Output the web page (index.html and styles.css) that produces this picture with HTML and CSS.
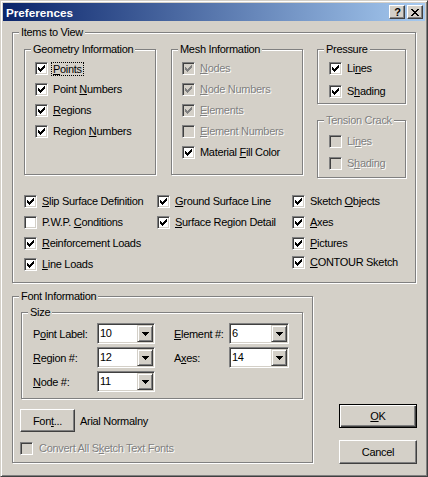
FILE: index.html
```html
<!DOCTYPE html>
<html>
<head>
<meta charset="utf-8">
<title>Preferences</title>
<link rel="stylesheet" href="styles.css">
</head>
<body>
<svg class="defs" width="0" height="0">
  <symbol id="chk" viewBox="0 0 7 7"><path d="M0 2h1v3H0z M1 3h1v3H1z M2 4h1v3H2z M3 3h1v3H3z M4 2h1v3H4z M5 1h1v3H5z M6 0h1v3H6z"/></symbol>
  <symbol id="tri" viewBox="0 0 7 4"><path d="M0 0h7v1H0z M1 1h5v1H1z M2 2h3v1H2z M3 3h1v1H3z"/></symbol>
</svg>
<div class="window">
  <div class="titlebar">
    <span class="title">Preferences</span>
    <div class="caption-btns">
      <span class="cap-btn help">?</span>
      <span class="cap-btn close"><svg width="8" height="7" viewBox="0 0 8 7"><path d="M0 0h2v1H0z M6 0h2v1H6z M1 1h2v1H1z M5 1h2v1H5z M2 2h4v1H2z M3 3h2v1H3z M2 4h4v1H2z M1 5h2v1H1z M5 5h2v1H5z M0 6h2v1H0z M6 6h2v1H6z"/></svg></span>
    </div>
  </div>
  <div class="client">
    <div class="group items">
      <span class="legend">Items to View</span>
      <div class="top-row">
        <div class="group geo">
          <span class="legend">Geometry Information</span>
          <div class="cb-list">
            <div class="cb-row"><span class="cb"><svg class="mark"><use href="#chk"/></svg></span><span class="focus"><u>P</u>oints</span></div>
            <div class="cb-row"><span class="cb"><svg class="mark"><use href="#chk"/></svg></span><span>Point <u>N</u>umbers</span></div>
            <div class="cb-row"><span class="cb"><svg class="mark"><use href="#chk"/></svg></span><span><u>R</u>egions</span></div>
            <div class="cb-row"><span class="cb"><svg class="mark"><use href="#chk"/></svg></span><span>Region <u>N</u>umbers</span></div>
          </div>
        </div>
        <div class="group mesh">
          <span class="legend">Mesh Information</span>
          <div class="cb-list">
            <div class="cb-row disabled"><span class="cb"><svg class="mark"><use href="#chk"/></svg></span><span><u>N</u>odes</span></div>
            <div class="cb-row disabled"><span class="cb"><svg class="mark"><use href="#chk"/></svg></span><span><u>N</u>ode Numbers</span></div>
            <div class="cb-row disabled"><span class="cb"><svg class="mark"><use href="#chk"/></svg></span><span><u>E</u>lements</span></div>
            <div class="cb-row disabled"><span class="cb"></span><span><u>E</u>lement Numbers</span></div>
            <div class="cb-row"><span class="cb"><svg class="mark"><use href="#chk"/></svg></span><span>Material <u>F</u>ill Color</span></div>
          </div>
        </div>
        <div class="side-col">
          <div class="group pressure">
            <span class="legend">Pressure</span>
            <div class="cb-list wide">
              <div class="cb-row"><span class="cb"><svg class="mark"><use href="#chk"/></svg></span><span>Li<u>n</u>es</span></div>
              <div class="cb-row"><span class="cb"><svg class="mark"><use href="#chk"/></svg></span><span>S<u>h</u>ading</span></div>
            </div>
          </div>
          <div class="group tension">
            <span class="legend disabled-text">Tension Crack</span>
            <div class="cb-list mid">
              <div class="cb-row disabled"><span class="cb"></span><span>Li<u>n</u>es</span></div>
              <div class="cb-row disabled"><span class="cb"></span><span>S<u>h</u>ading</span></div>
            </div>
          </div>
        </div>
      </div>
      <div class="opts">
        <div class="cb-list col1">
          <div class="cb-row"><span class="cb"><svg class="mark"><use href="#chk"/></svg></span><span><u>S</u>lip Surface Definition</span></div>
          <div class="cb-row"><span class="cb"></span><span>P.W.P. <u>C</u>onditions</span></div>
          <div class="cb-row"><span class="cb"><svg class="mark"><use href="#chk"/></svg></span><span><u>R</u>einforcement Loads</span></div>
          <div class="cb-row"><span class="cb"><svg class="mark"><use href="#chk"/></svg></span><span><u>L</u>ine Loads</span></div>
        </div>
        <div class="cb-list col2">
          <div class="cb-row"><span class="cb"><svg class="mark"><use href="#chk"/></svg></span><span><u>G</u>round Surface Line</span></div>
          <div class="cb-row"><span class="cb"><svg class="mark"><use href="#chk"/></svg></span><span><u>S</u>urface Region Detail</span></div>
        </div>
        <div class="cb-list col3">
          <div class="cb-row"><span class="cb"><svg class="mark"><use href="#chk"/></svg></span><span>Sketch <u>O</u>bjects</span></div>
          <div class="cb-row"><span class="cb"><svg class="mark"><use href="#chk"/></svg></span><span><u>A</u>xes</span></div>
          <div class="cb-row"><span class="cb"><svg class="mark"><use href="#chk"/></svg></span><span><u>P</u>ictures</span></div>
          <div class="cb-row last"><span class="cb"><svg class="mark"><use href="#chk"/></svg></span><span><u>C</u>ONTOUR Sketch</span></div>
        </div>
      </div>
    </div>

    <div class="bottom">
      <div class="group fontinfo">
        <span class="legend">Font Information</span>
        <div class="group size">
          <span class="legend">Size</span>
          <div class="size-cols">
            <div class="size-col left">
              <div class="field"><span class="flabel">P<u>o</u>int Label:</span><div class="combo"><span class="cval">10</span><span class="dd"><svg width="7" height="4"><use href="#tri"/></svg></span></div></div>
              <div class="field"><span class="flabel"><u>R</u>egion #:</span><div class="combo"><span class="cval">12</span><span class="dd"><svg width="7" height="4"><use href="#tri"/></svg></span></div></div>
              <div class="field"><span class="flabel"><u>N</u>ode #:</span><div class="combo"><span class="cval">11</span><span class="dd"><svg width="7" height="4"><use href="#tri"/></svg></span></div></div>
            </div>
            <div class="size-col right">
              <div class="field"><span class="flabel"><u>E</u>lement #:</span><div class="combo"><span class="cval">6</span><span class="dd"><svg width="7" height="4"><use href="#tri"/></svg></span></div></div>
              <div class="field"><span class="flabel">A<u>x</u>es:</span><div class="combo"><span class="cval">14</span><span class="dd"><svg width="7" height="4"><use href="#tri"/></svg></span></div></div>
            </div>
          </div>
        </div>
        <div class="font-row">
          <span class="btn font-btn">Fon<u>t</u>...</span>
          <span class="font-name">Arial Normalny</span>
        </div>
        <div class="cb-row disabled convert"><span class="cb"></span><span>Convert All S<u>k</u>etch Text Fonts</span></div>
      </div>
      <div class="btn-col">
        <span class="btn default"><u>O</u>K</span>
        <span class="btn cancel">Cancel</span>
      </div>
    </div>
  </div>
</div>
</body>
</html>
```

FILE: styles.css
```css
* { box-sizing: border-box; }
html, body { margin: 0; padding: 0; }
body {
  width: 428px;
  height: 477px;
  overflow: hidden;
  background: #D4D0C8;
  font-family: "Liberation Sans", Arial, sans-serif;
  font-size: 11px;
  letter-spacing: -0.3px;
  color: #000;
}
.defs { position: absolute; width: 0; height: 0; }
u { text-underline-offset: 1px; }

.window {
  width: 428px;
  height: 477px;
  background: #D4D0C8;
  border: 1px solid;
  border-color: #D4D0C8 #404040 #404040 #D4D0C8;
  box-shadow: inset 1px 1px 0 #fff, inset -1px -1px 0 #808080;
  padding: 2px;
  display: flex;
  flex-direction: column;
}

.titlebar {
  height: 18px;
  flex: none;
  background: linear-gradient(to right, #0A246A, #A6CAF0);
  display: flex;
  align-items: center;
  padding: 0 2px 0 3px;
}
.title {
  color: #fff;
  font-weight: bold;
  font-size: 11.7px;
  letter-spacing: 0;
}
.caption-btns { margin-left: auto; display: flex; gap: 2px; }
.cap-btn {
  width: 16px;
  height: 14px;
  background: #D4D0C8;
  border: 1px solid;
  border-color: #fff #404040 #404040 #fff;
  box-shadow: inset -1px -1px 0 #808080;
  display: flex;
  align-items: center;
  justify-content: center;
}
.cap-btn.help {
  font-weight: bold;
  font-size: 11px;
  line-height: 12px;
  letter-spacing: 0;
  padding-left: 1px;
}
.cap-btn.close svg { display: block; margin-left: 0; }

.client {
  flex: 1;
  padding: 11px 0 0 9px;
}

.group {
  position: relative;
  border: 1px solid #808080;
  box-shadow: inset 1px 1px 0 #fff, 1px 1px 0 #fff;
}
.legend {
  position: absolute;
  top: -7px;
  left: 6px;
  line-height: 13px;
  padding: 0 2px;
  background: #D4D0C8;
  white-space: nowrap;
}
.disabled-text {
  color: #808080;
  text-shadow: 1px 1px 0 #fff;
}

.items {
  width: 404px;
  height: 251px;
  padding: 16px 0 0 11px;
}
.top-row {
  display: flex;
  align-items: flex-start;
  height: 129px;
}
.geo, .mesh {
  width: 132px;
  height: 126px;
  padding: 12px 0 0 10px;
}
.geo { margin-right: 15px; }
.mesh { margin-right: 14px; }
.side-col { width: 89px; display: flex; flex-direction: column; }
.pressure {
  height: 55px;
  padding: 12px 0 0 11px;
}
.tension {
  margin-top: 16px;
  height: 58px;
  padding: 14px 0 0 11px;
}

.cb-list { display: flex; flex-direction: column; gap: 8px; }
.cb-list.wide { gap: 10px; }
.cb-list.mid { gap: 9px; }

.cb-row {
  display: flex;
  align-items: center;
  height: 13px;
  line-height: 13px;
  white-space: nowrap;
}
.cb {
  flex: none;
  width: 13px;
  height: 13px;
  margin-right: 5px;
  background: #fff;
  border: 1px solid;
  border-color: #808080 #fff #fff #808080;
  box-shadow: inset 1px 1px 0 #404040, inset -1px -1px 0 #D4D0C8;
  padding: 2px;
}
.mark { display: block; width: 7px; height: 7px; fill: #000; }
.disabled .cb { background: #D4D0C8; }
.disabled .mark { fill: #808080; }
.disabled > span:last-child {
  color: #808080;
  text-shadow: 1px 1px 0 #fff;
}
.focus {
  display: inline-block;
  line-height: 12px;
  height: 12px;
  padding: 0 1px;
  margin-left: -1px;
  outline: 1px dotted #000;
}

.opts {
  display: flex;
  margin-top: 17px;
}
.col1 { width: 133px; }
.col2 { width: 135px; }
.col3 .last { margin-top: -2px; }

.bottom {
  display: flex;
  align-items: flex-start;
  margin-top: 13px;
}
.fontinfo {
  width: 301px;
  height: 167px;
  padding: 15px 0 0 8px;
}
.size {
  width: 282px;
  height: 87px;
  padding: 10px 0 0 11px;
}
.size-cols { display: flex; }
.size-col { display: flex; flex-direction: column; gap: 3px; }
.size-col.right { margin-left: 19px; }
.field { display: flex; align-items: center; height: 21px; }
.left .flabel { width: 64px; }
.right .flabel { width: 55px; }
.combo {
  display: flex;
  align-items: center;
  height: 21px;
  width: 58px;
  background: #fff;
  border: 1px solid;
  border-color: #808080 #fff #fff #808080;
  box-shadow: inset 1px 1px 0 #404040, inset -1px -1px 0 #D4D0C8;
  padding: 1px;
}
.right .combo { width: 60px; }
.cval { padding-left: 1px; line-height: 17px; }
.dd {
  margin-left: auto;
  width: 16px;
  height: 17px;
  background: #D4D0C8;
  border: 1px solid;
  border-color: #D4D0C8 #404040 #404040 #D4D0C8;
  box-shadow: inset 1px 1px 0 #fff, inset -1px -1px 0 #808080;
  display: flex;
  align-items: center;
  justify-content: center;
}
.dd svg { display: block; fill: #000; }

.font-row {
  display: flex;
  align-items: center;
  margin-top: 10px;
  margin-left: -1px;
}
.btn {
  display: flex;
  align-items: center;
  justify-content: center;
  background: #D4D0C8;
  border: 1px solid;
  border-color: #fff #404040 #404040 #fff;
  box-shadow: inset -1px -1px 0 #808080;
}
.font-btn { width: 55px; height: 23px; }
.font-name { margin-left: 5px; }
.convert { margin-top: 10px; margin-left: -1px; }
.convert .cb { margin-right: 6px; }

.btn-col {
  display: flex;
  flex-direction: column;
  margin-left: 26px;
  padding-top: 108px;
}
.btn-col .btn { width: 78px; height: 24px; }
.btn.default {
  border-color: #000;
  box-shadow: inset 1px 1px 0 #fff, inset -1px -1px 0 #404040, inset -2px -2px 0 #808080;
}
.btn.cancel { margin-top: 12px; }
```
